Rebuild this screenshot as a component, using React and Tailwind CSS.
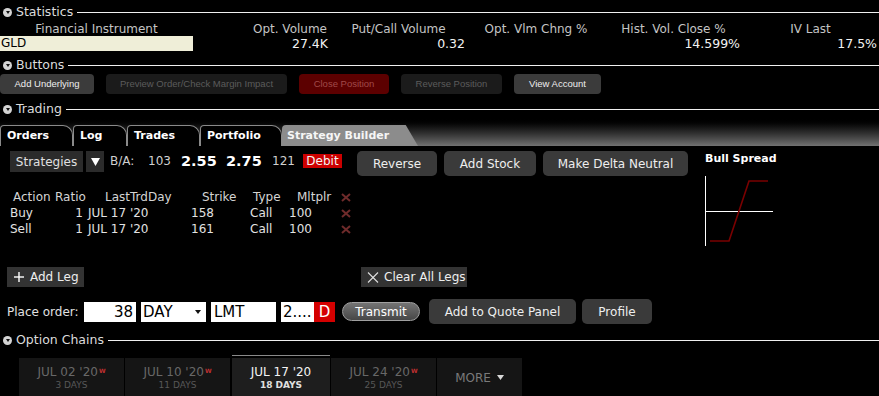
import React from "react";

const SectionHeader = ({ title }) => (
  <div className="flex items-center h-4">
    <span className="ml-[3px] w-[9px] h-[9px] rounded-full bg-[#d4d4d4] flex items-center justify-center shrink-0">
      <span className="w-0 h-0 mt-px border-l-[2.5px] border-r-[2.5px] border-t-[3.5px] border-l-transparent border-r-transparent border-t-[#111]" />
    </span>
    <span className="ml-[4px] text-[12.5px] leading-none text-[#dcdcdc] whitespace-nowrap">{title}</span>
    <div className="flex-1 h-px bg-[#f0f0f0] ml-[4px]" />
  </div>
);

const DarkX = () => (
  <svg width="10" height="9" viewBox="0 0 10 9">
    <line x1="1" y1="1" x2="9" y2="8" stroke="#6f2b2b" strokeWidth="2" />
    <line x1="9" y1="1" x2="1" y2="8" stroke="#6f2b2b" strokeWidth="2" />
  </svg>
);

const statCols = [
  { label: "Financial Instrument", value: "", cls: "w-[193px] text-center", vcls: "w-[193px]" },
  { label: "Opt. Volume", value: "27.4K", cls: "w-[137px] text-right pr-[3px]", vcls: "w-[137px] text-right pr-[2px]" },
  { label: "Put/Call Volume", value: "0.32", cls: "w-[137px] text-center", vcls: "w-[137px] text-right pr-[2px]" },
  { label: "Opt. Vlm Chng %", value: "", cls: "w-[138px] text-center", vcls: "w-[138px] text-right pr-[2px]" },
  { label: "Hist. Vol. Close %", value: "14.599%", cls: "w-[137px] text-center", vcls: "w-[137px] text-right pr-[2px]" },
  { label: "IV Last", value: "17.5%", cls: "w-[137px] text-center", vcls: "w-[137px] text-right pr-[2px]" },
];

const actionButtons = [
  { label: "Add Underlying", cls: "w-[94px] bg-[#3b3b3b] text-[#eeeeee]" },
  { label: "Preview Order/Check Margin Impact", cls: "w-[181px] ml-[12px] bg-[#1b1b1b] text-[#5c5c5c]" },
  { label: "Close Position", cls: "w-[90px] ml-[12px] bg-[#5c0000] text-[#a04a4a]" },
  { label: "Reverse Position", cls: "w-[101px] ml-[12px] bg-[#1b1b1b] text-[#5c5c5c]" },
  { label: "View Account", cls: "w-[87px] ml-[12px] bg-[#3b3b3b] text-[#eeeeee]" },
];

const tabs = [
  { label: "Orders", cls: "w-[73px]" },
  { label: "Log", cls: "w-[54px]" },
  { label: "Trades", cls: "w-[73px]" },
  { label: "Portfolio", cls: "w-[82px]" },
];

const legs = [
  { action: "Buy", ratio: "1", day: "JUL 17 '20", strike: "158", type: "Call", mult: "100" },
  { action: "Sell", ratio: "1", day: "JUL 17 '20", strike: "161", type: "Call", mult: "100" },
];

const expiries = [
  { date: "JUL 02 '20", days: "3 DAYS", w: true, cls: "w-[105px]" },
  { date: "JUL 10 '20", days: "11 DAYS", w: true, cls: "w-[105px] ml-px" },
  { date: "JUL 17 '20", days: "18 DAYS", w: false, active: true, cls: "w-[98px] ml-[2px]" },
  { date: "JUL 24 '20", days: "25 DAYS", w: true, cls: "w-[105px] ml-px" },
];

const GrayButton = ({ children, cls }) => (
  <div className={`h-[25px] rounded-[5px] bg-[#3a3a3a] text-[#eeeeee] text-[12px] flex items-center justify-center whitespace-nowrap shrink-0 ${cls}`}>
    {children}
  </div>
);

export default function App() {
  return (
    <div className="w-[879px] h-[396px] overflow-hidden bg-black text-[#dddddd] font-['DejaVu_Sans',sans-serif]">
      {/* Statistics */}
      <div className="pt-[4px]">
        <SectionHeader title="Statistics" />
      </div>
      <div className="flex h-[14px] mt-[2px] text-[12px] leading-[14px] text-[#c4c4c4] whitespace-nowrap">
        {statCols.map((c) => (
          <div key={c.label} className={`shrink-0 ${c.cls}`}>{c.label}</div>
        ))}
      </div>
      <div className="flex h-[15px] text-[12.5px] leading-[15px] text-[#f2f2f2] whitespace-nowrap">
        {statCols.map((c, i) =>
          i === 0 ? (
            <div key={c.label} className="w-[193px] shrink-0 bg-[#efeed8] text-black pl-[1px] text-[12px]">GLD</div>
          ) : (
            <div key={c.label} className={`shrink-0 ${c.vcls}`}>{c.value}</div>
          )
        )}
      </div>

      {/* Buttons */}
      <div className="mt-[6px]">
        <SectionHeader title="Buttons" />
      </div>
      <div className="flex h-[20px] mt-[1px]">
        {actionButtons.map((b) => (
          <div key={b.label} className={`h-[20px] rounded-[4px] flex items-center justify-center text-[9.5px] font-['Liberation_Sans',sans-serif] whitespace-nowrap shrink-0 ${b.cls}`}>
            {b.label}
          </div>
        ))}
      </div>

      {/* Trading */}
      <div className="mt-[7px]">
        <SectionHeader title="Trading" />
      </div>
      <div className="h-[29px] bg-linear-to-b from-black to-[#727272] flex items-end">
        {tabs.map((t) => (
          <div key={t.label} className={`h-[21px] shrink-0 bg-black border-t border-l border-r border-[#8a8a8a] rounded-tl-[4px] rounded-tr-[10px] pl-[6px] text-[11px] font-bold text-white leading-[20px] ${t.cls}`}>
            {t.label}
          </div>
        ))}
        <div className="h-[21px] w-[136px] shrink-0 bg-[#8c8c8c] rounded-tl-[4px] pl-[5px] text-[11px] font-bold text-[#f6f6f6] leading-[21px] [clip-path:polygon(0_0,91%_0,100%_100%,0_100%)]">
          Strategy Builder
        </div>
      </div>

      <div className="flex mt-[5px]">
        {/* Left column */}
        <div className="w-[695px] shrink-0">
          <div className="flex items-start h-[25px] text-[12px] whitespace-nowrap">
            <div className="ml-[10px] w-[73px] h-[21px] bg-[#2b2b2b] text-[#e0e0e0] flex items-center justify-center shrink-0">Strategies</div>
            <div className="ml-[3px] w-[18px] h-[21px] bg-[#2b2b2b] flex items-center justify-center shrink-0">
              <svg width="9" height="8" viewBox="0 0 9 8"><polygon points="0,0 9,0 4.5,8" fill="#ffffff" /></svg>
            </div>
            <div className="ml-[6px] w-[38px] leading-[21px] text-[#cfcfcf] shrink-0">B/A:</div>
            <div className="w-[33px] leading-[21px] text-[#d0d0d0] shrink-0">103</div>
            <div className="w-[45px] leading-[21px] text-[14.5px] font-bold text-white shrink-0">2.55</div>
            <div className="w-[46px] leading-[21px] text-[14.5px] font-bold text-white shrink-0">2.75</div>
            <div className="w-[31px] leading-[21px] text-[#d0d0d0] shrink-0">121</div>
            <div className="mt-[3px] w-[39px] h-[14px] bg-[#cc0000] text-[#f4f4f4] leading-[14px] text-center shrink-0">Debit</div>
            <GrayButton cls="ml-[15px] w-[80px]">Reverse</GrayButton>
            <GrayButton cls="ml-[7px] w-[92px]">Add Stock</GrayButton>
            <GrayButton cls="ml-[7px] w-[145px]">Make Delta Neutral</GrayButton>
          </div>

          {/* Legs table */}
          <div className="mt-[13px] text-[12px] whitespace-nowrap">
            <div className="flex items-center h-[16px] text-[#d4d4d4]">
              <div className="w-[55px] pl-[13px] shrink-0">Action</div>
              <div className="w-[50px] shrink-0">Ratio</div>
              <div className="w-[97px] shrink-0">LastTrdDay</div>
              <div className="w-[34px] text-right shrink-0">Strike</div>
              <div className="w-[61px] pl-[17px] shrink-0">Type</div>
              <div className="w-[44px] shrink-0">Mltplr</div>
              <div className="w-[12px] flex items-center shrink-0"><DarkX /></div>
            </div>
            {legs.map((l) => (
              <div key={l.action} className="flex items-center h-[16px] text-[#e2e2e2]">
                <div className="w-[75px] pl-[10px] shrink-0">{l.action}</div>
                <div className="w-[8px] text-right shrink-0">{l.ratio}</div>
                <div className="w-[108px] pl-[5px] shrink-0">{l.day}</div>
                <div className="w-[59px] shrink-0">{l.strike}</div>
                <div className="w-[39px] shrink-0">{l.type}</div>
                <div className="w-[52px] shrink-0">{l.mult}</div>
                <div className="w-[12px] flex items-center shrink-0"><DarkX /></div>
              </div>
            ))}
          </div>

          {/* Leg buttons */}
          <div className="flex mt-[30px] h-[20px] text-[12px] whitespace-nowrap">
            <div className="ml-[7px] w-[77px] h-[20px] bg-[#333333] flex items-center pl-[7px] gap-[6px] text-[#eeeeee] shrink-0">
              <svg width="10" height="10" viewBox="0 0 10 10">
                <line x1="5" y1="0" x2="5" y2="10" stroke="#ffffff" strokeWidth="1.4" />
                <line x1="0" y1="5" x2="10" y2="5" stroke="#ffffff" strokeWidth="1.4" />
              </svg>
              Add Leg
            </div>
            <div className="ml-[277px] w-[106px] h-[20px] bg-[#333333] flex items-center pl-[6px] gap-[5px] text-[#eeeeee] shrink-0">
              <svg width="12" height="11" viewBox="0 0 12 11">
                <line x1="1" y1="0.5" x2="11" y2="10.5" stroke="#e0e0e0" strokeWidth="1.1" />
                <line x1="11" y1="0.5" x2="1" y2="10.5" stroke="#e0e0e0" strokeWidth="1.1" />
              </svg>
              Clear All Legs
            </div>
          </div>
        </div>

        {/* Right column: payoff chart */}
        <div className="pl-[10px]">
          <div className="h-[14px] mt-px text-[11px] font-bold text-white leading-[14px] whitespace-nowrap">Bull Spread</div>
          <svg width="70" height="72" viewBox="0 0 70 72" className="mt-[10px]">
            <line x1="0.5" y1="0" x2="0.5" y2="70" stroke="#ffffff" strokeWidth="1" />
            <line x1="0" y1="35.5" x2="68" y2="35.5" stroke="#ffffff" strokeWidth="1" />
            <polyline points="5,65 24,65 44,5 63,5" fill="none" stroke="#7a0000" strokeWidth="1.6" />
          </svg>
        </div>
      </div>

      {/* Place order */}
      <div className="flex items-center h-[25px] mt-[12px] whitespace-nowrap">
        <div className="ml-[7px] w-[77px] text-[12px] text-[#e2e2e2] shrink-0">Place order:</div>
        <div className="w-[52px] h-[20px] bg-white text-black text-[15px] leading-[20px] text-right pr-[3px] shrink-0">38</div>
        <div className="ml-[5px] w-[65px] h-[20px] bg-white text-black text-[15px] leading-[20px] pl-[2px] flex items-center justify-between pr-[5px] shrink-0">
          DAY
          <svg width="6" height="4" viewBox="0 0 6 4"><polygon points="0,0 6,0 3,4" fill="#111" /></svg>
        </div>
        <div className="ml-[5px] w-[65px] h-[20px] bg-white text-black text-[15px] leading-[20px] pl-[3px] shrink-0">LMT</div>
        <div className="ml-[5px] w-[33px] h-[20px] bg-white text-black text-[15px] leading-[20px] pl-[2px] overflow-hidden shrink-0">2....</div>
        <div className="w-[21px] h-[20px] bg-[#d40000] text-white text-[15px] leading-[20px] text-center shrink-0">D</div>
        <div className="ml-[7px] w-[78px] h-[19px] rounded-full border border-[#a0a0a0] bg-linear-to-b from-[#747474] to-[#474747] text-[12px] text-white flex items-center justify-center shrink-0">
          Transmit
        </div>
        <GrayButton cls="ml-[9px] w-[147px]">Add to Quote Panel</GrayButton>
        <GrayButton cls="ml-[6px] w-[70px]">Profile</GrayButton>
      </div>

      {/* Option Chains */}
      <div className="mt-[8px]">
        <SectionHeader title="Option Chains" />
      </div>
      <div className="flex mt-[7px] ml-[19px]">
        {expiries.map((e) => (
          <div key={e.date} className={`shrink-0 flex flex-col ${e.cls}`}>
            <div className={e.active ? "h-px bg-[#8a8a8a]" : "h-px"} />
            <div className="h-[2px]" />
            <div className={`h-[40px] flex flex-col items-center pt-[7px] ${e.active ? "bg-[#1e1e1e]" : "bg-[#151515]"}`}>
              <div className={`text-[12px] leading-[14px] whitespace-nowrap ${e.active ? "text-[#f4f4f4]" : "text-[#686868]"}`}>
                {e.date}
                {e.w && <sup className="text-[6px] font-bold text-[#c03030] ml-px">W</sup>}
              </div>
              <div className={`text-[9px] leading-[12px] whitespace-nowrap ${e.active ? "text-[#e0e0e0] font-bold" : "text-[#585858]"}`}>
                {e.days}
              </div>
            </div>
          </div>
        ))}
        <div className="ml-px w-[85px] shrink-0 flex flex-col">
          <div className="h-[3px]" />
          <div className="h-[40px] bg-[#151515] flex items-center justify-center gap-[6px] text-[12px] text-[#7a7a7a] pb-[1px]">
            MORE
            <svg width="7" height="5" viewBox="0 0 7 5"><polygon points="0,0 7,0 3.5,5" fill="#d8d8d8" /></svg>
          </div>
        </div>
      </div>
    </div>
  );
}
